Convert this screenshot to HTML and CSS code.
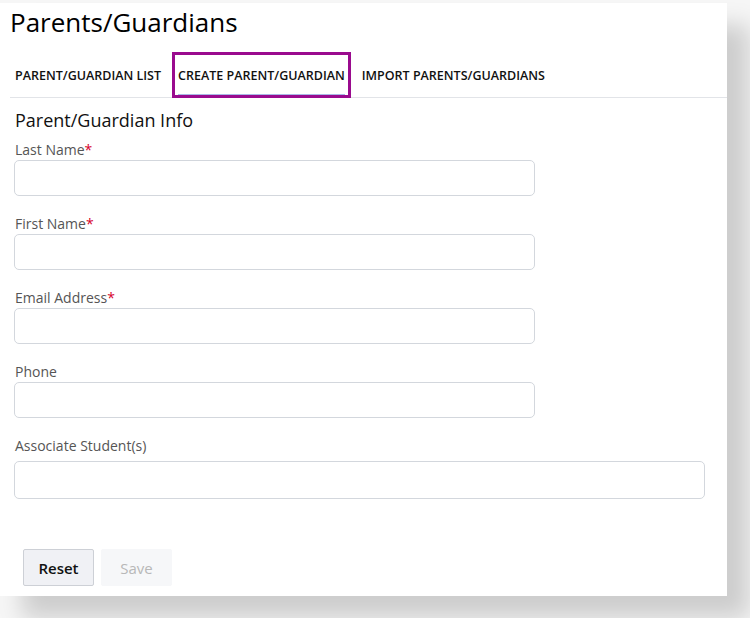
FILE: index.html
```html
<!DOCTYPE html>
<html lang="en">
<head>
    <meta charset="UTF-8">
    <meta name="viewport" content="width=device-width, initial-scale=1.0">
    <title>Parents/Guardians</title>
    <link rel="stylesheet" href="styles.css">
</head>
<body>

    <div class="panel">
        <h1>Parents/Guardians</h1>

        <!-- Tabs -->
        <div class="tabs">
            <span class="tab">PARENT/GUARDIAN LIST</span>
            <span class="tab active"><span class="tab-label">CREATE PARENT/GUARDIAN</span></span>
            <span class="tab">IMPORT PARENTS/GUARDIANS</span>
        </div>

        <!-- Create form -->
        <form class="form">
            <h2>Parent/Guardian Info</h2>

            <div class="field">
                <label for="lastName">Last Name<span class="req">*</span></label>
                <input type="text" id="lastName">
            </div>

            <div class="field">
                <label for="firstName">First Name<span class="req">*</span></label>
                <input type="text" id="firstName">
            </div>

            <div class="field">
                <label for="email">Email Address<span class="req">*</span></label>
                <input type="text" id="email">
            </div>

            <div class="field">
                <label for="phone">Phone</label>
                <input type="text" id="phone">
            </div>

            <div class="field wide">
                <label for="students">Associate Student(s)</label>
                <input type="text" id="students">
            </div>

            <div class="actions">
                <button type="button" class="btn">Reset</button>
                <button type="button" class="btn" disabled>Save</button>
            </div>
        </form>
    </div>

</body>
</html>
```

FILE: styles.css
```css
/* General Body Styling */
body {
    font-family: 'Open Sans', 'Noto Sans', sans-serif;
    background: #f6f6f6;
    color: #111;
    margin: 0;
    height: 618px;
    overflow: hidden;
}

/* Panel */
.panel {
    width: 727px;
    height: 593px;
    margin-top: 3px;
    background: #fff;
    box-shadow: 22px 22px 22px rgba(0, 0, 0, 0.17);
    box-sizing: border-box;
}

h1 {
    margin: 0;
    padding-left: 10px;
    font-size: 26px;
    font-weight: 400;
    line-height: 38px;
    color: #000;
}

/* Tabs */
.tabs {
    display: flex;
    align-items: center;
    gap: 11px;
    height: 45px;
    margin: 11px 0 0 10px;
    padding-left: 5px;
    border-bottom: 1px solid #e2e4e8;
}

.tab {
    display: flex;
    align-items: center;
    height: 100%;
    padding-top: 1px;
    box-sizing: border-box;
    font-size: 12.5px;
    font-weight: 600;
}

.tab.active {
    height: 46px;
    margin-top: 1px;
    padding: 1px 3px 0;
    border: 3px solid #9a0b8e;
}

.tab-label {
    height: 100%;
    display: flex;
    align-items: center;
    box-sizing: border-box;
    border-bottom: 1px solid #a9b9e6;
}

/* Form */
.form {
    padding: 10px 0 0 14px;
}

h2 {
    margin: 0 0 8px 1px;
    font-size: 18px;
    font-weight: 500;
    line-height: 24px;
}

.field {
    margin-bottom: 18px;
}

label {
    display: block;
    font-size: 14px;
    line-height: 20px;
    color: #555;
    padding-left: 1px;
}

.req {
    color: #d6002a;
}

input[type="text"] {
    display: block;
    width: 521px;
    height: 36px;
    box-sizing: border-box;
    margin: 0;
    border: 1px solid #d3d7dd;
    border-radius: 5px;
    outline: none;
}

.wide label {
    margin-bottom: 5px;
}

.wide input[type="text"] {
    width: 691px;
    height: 38px;
}

/* Buttons */
.actions {
    display: flex;
    gap: 7px;
    margin: 50px 0 0 9px;
}

.btn {
    width: 71px;
    height: 37px;
    font-family: inherit;
    font-size: 15px;
    font-weight: 600;
    color: #111;
    background: #f0f1f5;
    border: 1px solid #cdd0d6;
    border-radius: 2px;
}

.btn:disabled {
    font-weight: 400;
    color: #b8b8b8;
    background: #f6f7f9;
    border-color: #f6f7f9;
}
```
